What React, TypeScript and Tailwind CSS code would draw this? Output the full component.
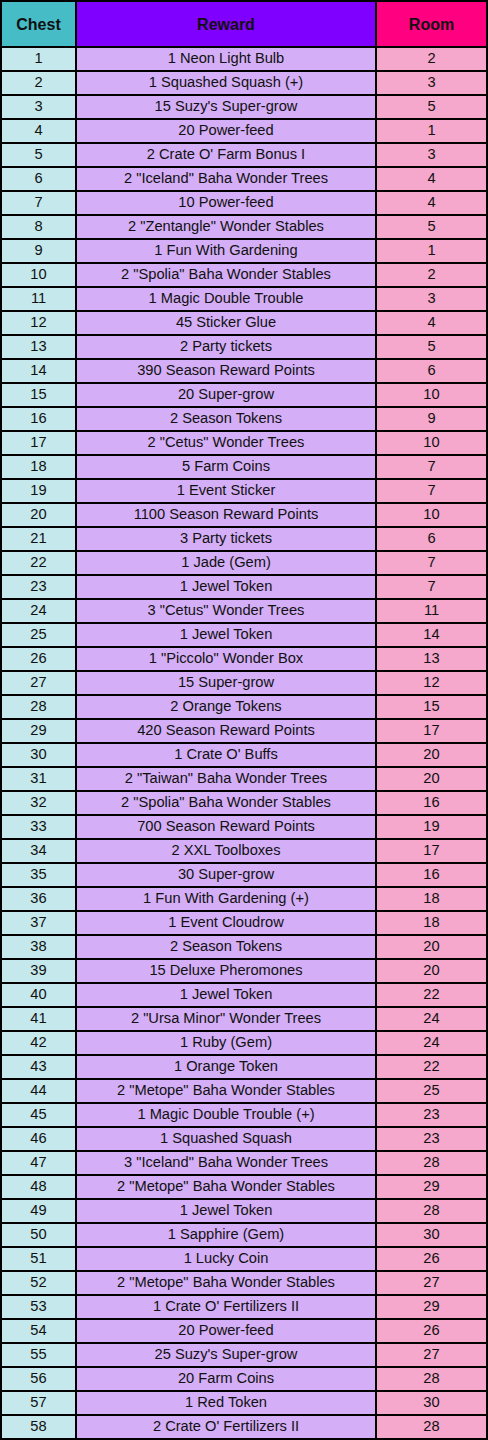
import React from "react";

const rows: [string, string][] = [
  ["1 Neon Light Bulb", "2"],
  ["1 Squashed Squash (+)", "3"],
  ["15 Suzy's Super-grow", "5"],
  ["20 Power-feed", "1"],
  ["2 Crate O' Farm Bonus I", "3"],
  ["2 \"Iceland\" Baha Wonder Trees", "4"],
  ["10 Power-feed", "4"],
  ["2 \"Zentangle\" Wonder Stables", "5"],
  ["1 Fun With Gardening", "1"],
  ["2 \"Spolia\" Baha Wonder Stables", "2"],
  ["1 Magic Double Trouble", "3"],
  ["45 Sticker Glue", "4"],
  ["2 Party tickets", "5"],
  ["390 Season Reward Points", "6"],
  ["20 Super-grow", "10"],
  ["2 Season Tokens", "9"],
  ["2 \"Cetus\" Wonder Trees", "10"],
  ["5 Farm Coins", "7"],
  ["1 Event Sticker", "7"],
  ["1100 Season Reward Points", "10"],
  ["3 Party tickets", "6"],
  ["1 Jade (Gem)", "7"],
  ["1 Jewel Token", "7"],
  ["3 \"Cetus\" Wonder Trees", "11"],
  ["1 Jewel Token", "14"],
  ["1 \"Piccolo\" Wonder Box", "13"],
  ["15 Super-grow", "12"],
  ["2 Orange Tokens", "15"],
  ["420 Season Reward Points", "17"],
  ["1 Crate O' Buffs", "20"],
  ["2 \"Taiwan\" Baha Wonder Trees", "20"],
  ["2 \"Spolia\" Baha Wonder Stables", "16"],
  ["700 Season Reward Points", "19"],
  ["2 XXL Toolboxes", "17"],
  ["30 Super-grow", "16"],
  ["1 Fun With Gardening (+)", "18"],
  ["1 Event Cloudrow", "18"],
  ["2 Season Tokens", "20"],
  ["15 Deluxe Pheromones", "20"],
  ["1 Jewel Token", "22"],
  ["2 \"Ursa Minor\" Wonder Trees", "24"],
  ["1 Ruby (Gem)", "24"],
  ["1 Orange Token", "22"],
  ["2 \"Metope\" Baha Wonder Stables", "25"],
  ["1 Magic Double Trouble (+)", "23"],
  ["1 Squashed Squash", "23"],
  ["3 \"Iceland\" Baha Wonder Trees", "28"],
  ["2 \"Metope\" Baha Wonder Stables", "29"],
  ["1 Jewel Token", "28"],
  ["1 Sapphire (Gem)", "30"],
  ["1 Lucky Coin", "26"],
  ["2 \"Metope\" Baha Wonder Stables", "27"],
  ["1 Crate O' Fertilizers II", "29"],
  ["20 Power-feed", "26"],
  ["25 Suzy's Super-grow", "27"],
  ["20 Farm Coins", "28"],
  ["1 Red Token", "30"],
  ["2 Crate O' Fertilizers II", "28"],
];

export default function App() {
  return (
    <div
      className="w-[488px] bg-black p-[2px] text-[#111]"
      style={{ fontFamily: '"Liberation Sans", Arial, sans-serif' }}
    >
      <div className="grid grid-cols-[73px_298px_109px] gap-[2px]">
        <div className="h-[44px] bg-[#46bcc6] flex items-center justify-center font-bold text-[16px] pt-[1px]">Chest</div>
        <div className="h-[44px] bg-[#8000ff] flex items-center justify-center font-bold text-[16px] pt-[1px]">Reward</div>
        <div className="h-[44px] bg-[#ff0080] flex items-center justify-center font-bold text-[16px] pt-[1px]">Room</div>
        {rows.map(([reward, room], i) => (
          <React.Fragment key={i}>
            <div className="h-[22px] bg-[#c4e8eb] flex items-center justify-center text-[14.667px] leading-[17px] pb-[1px]">{i + 1}</div>
            <div className="h-[22px] bg-[#d4aef6] flex items-center justify-center text-[14.667px] leading-[17px] pb-[1px]">{reward}</div>
            <div className="h-[22px] bg-[#f5a7cc] flex items-center justify-center text-[14.667px] leading-[17px] pb-[1px]">{room}</div>
          </React.Fragment>
        ))}
      </div>
    </div>
  );
}
